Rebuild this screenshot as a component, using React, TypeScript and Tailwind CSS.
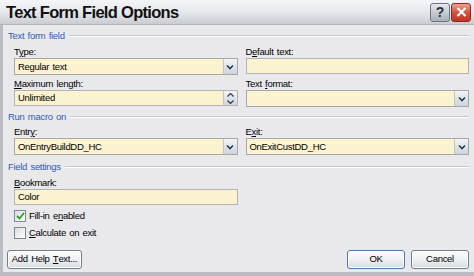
import React from 'react';

const font = { fontFamily: '"Liberation Sans", Arial, sans-serif' };

function Label({ children }: { children: React.ReactNode }) {
  return <div className="h-[13px] leading-[13px] text-[#000]">{children}</div>;
}

function U({ children }: { children: React.ReactNode }) {
  return <span className="underline underline-offset-1">{children}</span>;
}

function Chevron() {
  return (
    <svg width="8" height="6" viewBox="0 0 8 6">
      <path d="M1 1.5 L4 4.5 L7 1.5" fill="none" stroke="#2a3a5a" strokeWidth="1.6" />
    </svg>
  );
}

function Select({ value }: { value?: string }) {
  return (
    <div className="flex h-[17px] border border-[#a8a8a8] bg-[#fbf2cf]">
      <div className="flex-1 pl-[3px] leading-[15px] text-[#000]">{value}</div>
      <div className="flex w-[14px] items-center justify-center border-l border-[#c4c4c4] bg-gradient-to-b from-[#f2f4f8] to-[#cfd4dc]">
        <Chevron />
      </div>
    </div>
  );
}

function Input({ value }: { value?: string }) {
  return (
    <div className="h-[16px] border border-[#b4b4b4] bg-[#fbf2cf] pl-[3px] leading-[14px] text-[#000]">
      {value}
    </div>
  );
}

function Spinner({ value }: { value: string }) {
  return (
    <div className="flex h-[16px] border border-[#b4b4b4] bg-[#fbf2cf]">
      <div className="flex-1 pl-[3px] leading-[14px] text-[#000]">{value}</div>
      <div className="flex w-[14px] flex-col border-l border-[#c4c4c4] bg-gradient-to-b from-[#f2f4f8] to-[#cfd4dc]">
        <div className="flex flex-1 items-center justify-center">
          <svg width="7" height="4" viewBox="0 0 7 4"><path d="M0.5 3.5 L3.5 0.5 L6.5 3.5" fill="none" stroke="#2a3a5a" strokeWidth="1.2" /></svg>
        </div>
        <div className="flex flex-1 items-center justify-center">
          <svg width="7" height="4" viewBox="0 0 7 4"><path d="M0.5 0.5 L3.5 3.5 L6.5 0.5" fill="none" stroke="#2a3a5a" strokeWidth="1.2" /></svg>
        </div>
      </div>
    </div>
  );
}

function Section({ title }: { title: string }) {
  return (
    <div className="flex h-[14px] items-center gap-[4px] pl-[5px] pr-[5px]">
      <span className="text-[#2f5cb4]">{title}</span>
      <div className="flex-1 border-t border-[#c9c9c9] border-b border-b-white" />
    </div>
  );
}

function Check({ checked }: { checked?: boolean }) {
  return (
    <div className="flex h-[12px] w-[12px] items-center justify-center border border-[#7a8a99] bg-gradient-to-br from-[#dcdcdc] to-white">
      {checked && (
        <svg width="9" height="8" viewBox="0 0 9 8">
          <path d="M1 4 L3.5 6.5 L8 1" fill="none" stroke="#21a121" strokeWidth="1.8" />
        </svg>
      )}
    </div>
  );
}

function Button({ children, className }: { children: React.ReactNode; className?: string }) {
  return (
    <div
      className={`flex h-[19px] items-center justify-center whitespace-nowrap rounded-[3px] border bg-gradient-to-b from-[#fdfdfd] via-[#eef0f3] to-[#d7dce3] text-[#000] shadow-[inset_0_0_0_1px_#ffffff] ${className ?? ''}`}
    >
      {children}
    </div>
  );
}

export default function App() {
  return (
    <div
      className="flex h-[276px] w-[474px] flex-col overflow-hidden bg-[#e9e9eb] text-[9.5px] tracking-[-0.3px] [word-spacing:1px]"
      style={font}
    >
      {/* Title bar */}
      <div className="flex h-[25px] shrink-0 items-center justify-between border-b border-[#b0b4bc] bg-gradient-to-b from-[#f4f5f8] via-[#e6e8ec] to-[#c9ccd3] pl-[6px] pr-[3px]">
        <span className="text-[16.5px] font-bold tracking-[-0.7px] text-[#111] [word-spacing:0px]">Text Form Field Options</span>
        <div className="flex gap-[1px]">
          <div className="flex h-[19px] w-[20px] items-center justify-center rounded-[3px] border border-[#6e7580] bg-gradient-to-b from-[#e6e9ee] to-[#a9b0ba] text-[14px] font-bold tracking-normal text-[#2a2f38]">
            ?
          </div>
          <div className="flex h-[19px] w-[20px] items-center justify-center rounded-[3px] border border-[#8a2a20] bg-gradient-to-b from-[#f0a090] via-[#d4513c] to-[#c1331f]">
            <svg width="11" height="10" viewBox="0 0 11 10">
              <path d="M1.5 1 L9.5 9 M9.5 1 L1.5 9" stroke="#fff" strokeWidth="2.2" />
            </svg>
          </div>
        </div>
      </div>

      {/* Body */}
      <div className="flex flex-1 flex-col border-b-[4px] border-l-[3px] border-[#b9bcc2] pt-[4px]">
        <Section title="Text form field" />
        <div className="grid grid-cols-2 gap-x-[8px] pl-[11px] pr-[5px] pt-[2px]">
          <div>
            <Label>T<U>y</U>pe:</Label>
            <Select value="Regular text" />
          </div>
          <div>
            <Label>D<U>e</U>fault text:</Label>
            <Input />
          </div>
          <div className="pt-[2px]">
            <Label><U>M</U>aximum length:</Label>
            <Spinner value="Unlimited" />
          </div>
          <div className="pt-[2px]">
            <Label>Text <U>f</U>ormat:</Label>
            <Select />
          </div>
        </div>

        <div className="pt-[3px]">
          <Section title="Run macro on" />
        </div>
        <div className="grid grid-cols-2 gap-x-[8px] pl-[11px] pr-[5px] pt-[1px]">
          <div>
            <Label>Entr<U>y</U>:</Label>
            <Select value="OnEntryBuildDD_HC" />
          </div>
          <div>
            <Label>E<U>x</U>it:</Label>
            <Select value="OnExitCustDD_HC" />
          </div>
        </div>

        <div className="pt-[5px]">
          <Section title="Field settings" />
        </div>
        <div className="grid grid-cols-2 gap-x-[8px] pl-[11px] pr-[5px] pt-[2px]">
          <div>
            <Label><U>B</U>ookmark:</Label>
            <Input value="Color" />
          </div>
        </div>
        <div className="flex flex-col gap-[5px] pl-[11px] pt-[5px] text-[#000]">
          <div className="flex h-[12px] items-center gap-[3px]">
            <Check checked />
            <span>Fill-in e<U>n</U>abled</span>
          </div>
          <div className="flex h-[12px] items-center gap-[3px]">
            <Check />
            <span><U>C</U>alculate on exit</span>
          </div>
        </div>

        <div className="mt-auto flex items-center pb-[3px] pl-[4px] pr-[5px]">
          <Button className="w-[75px] border-[#6f7f94]">
            Add Help&nbsp;<U>T</U>ext...
          </Button>
          <div className="flex-1" />
          <Button className="w-[58px] border-[#4f78b0]">OK</Button>
          <Button className="ml-[6px] w-[58px] border-[#6f7f94]">Cancel</Button>
        </div>
      </div>
    </div>
  );
}
